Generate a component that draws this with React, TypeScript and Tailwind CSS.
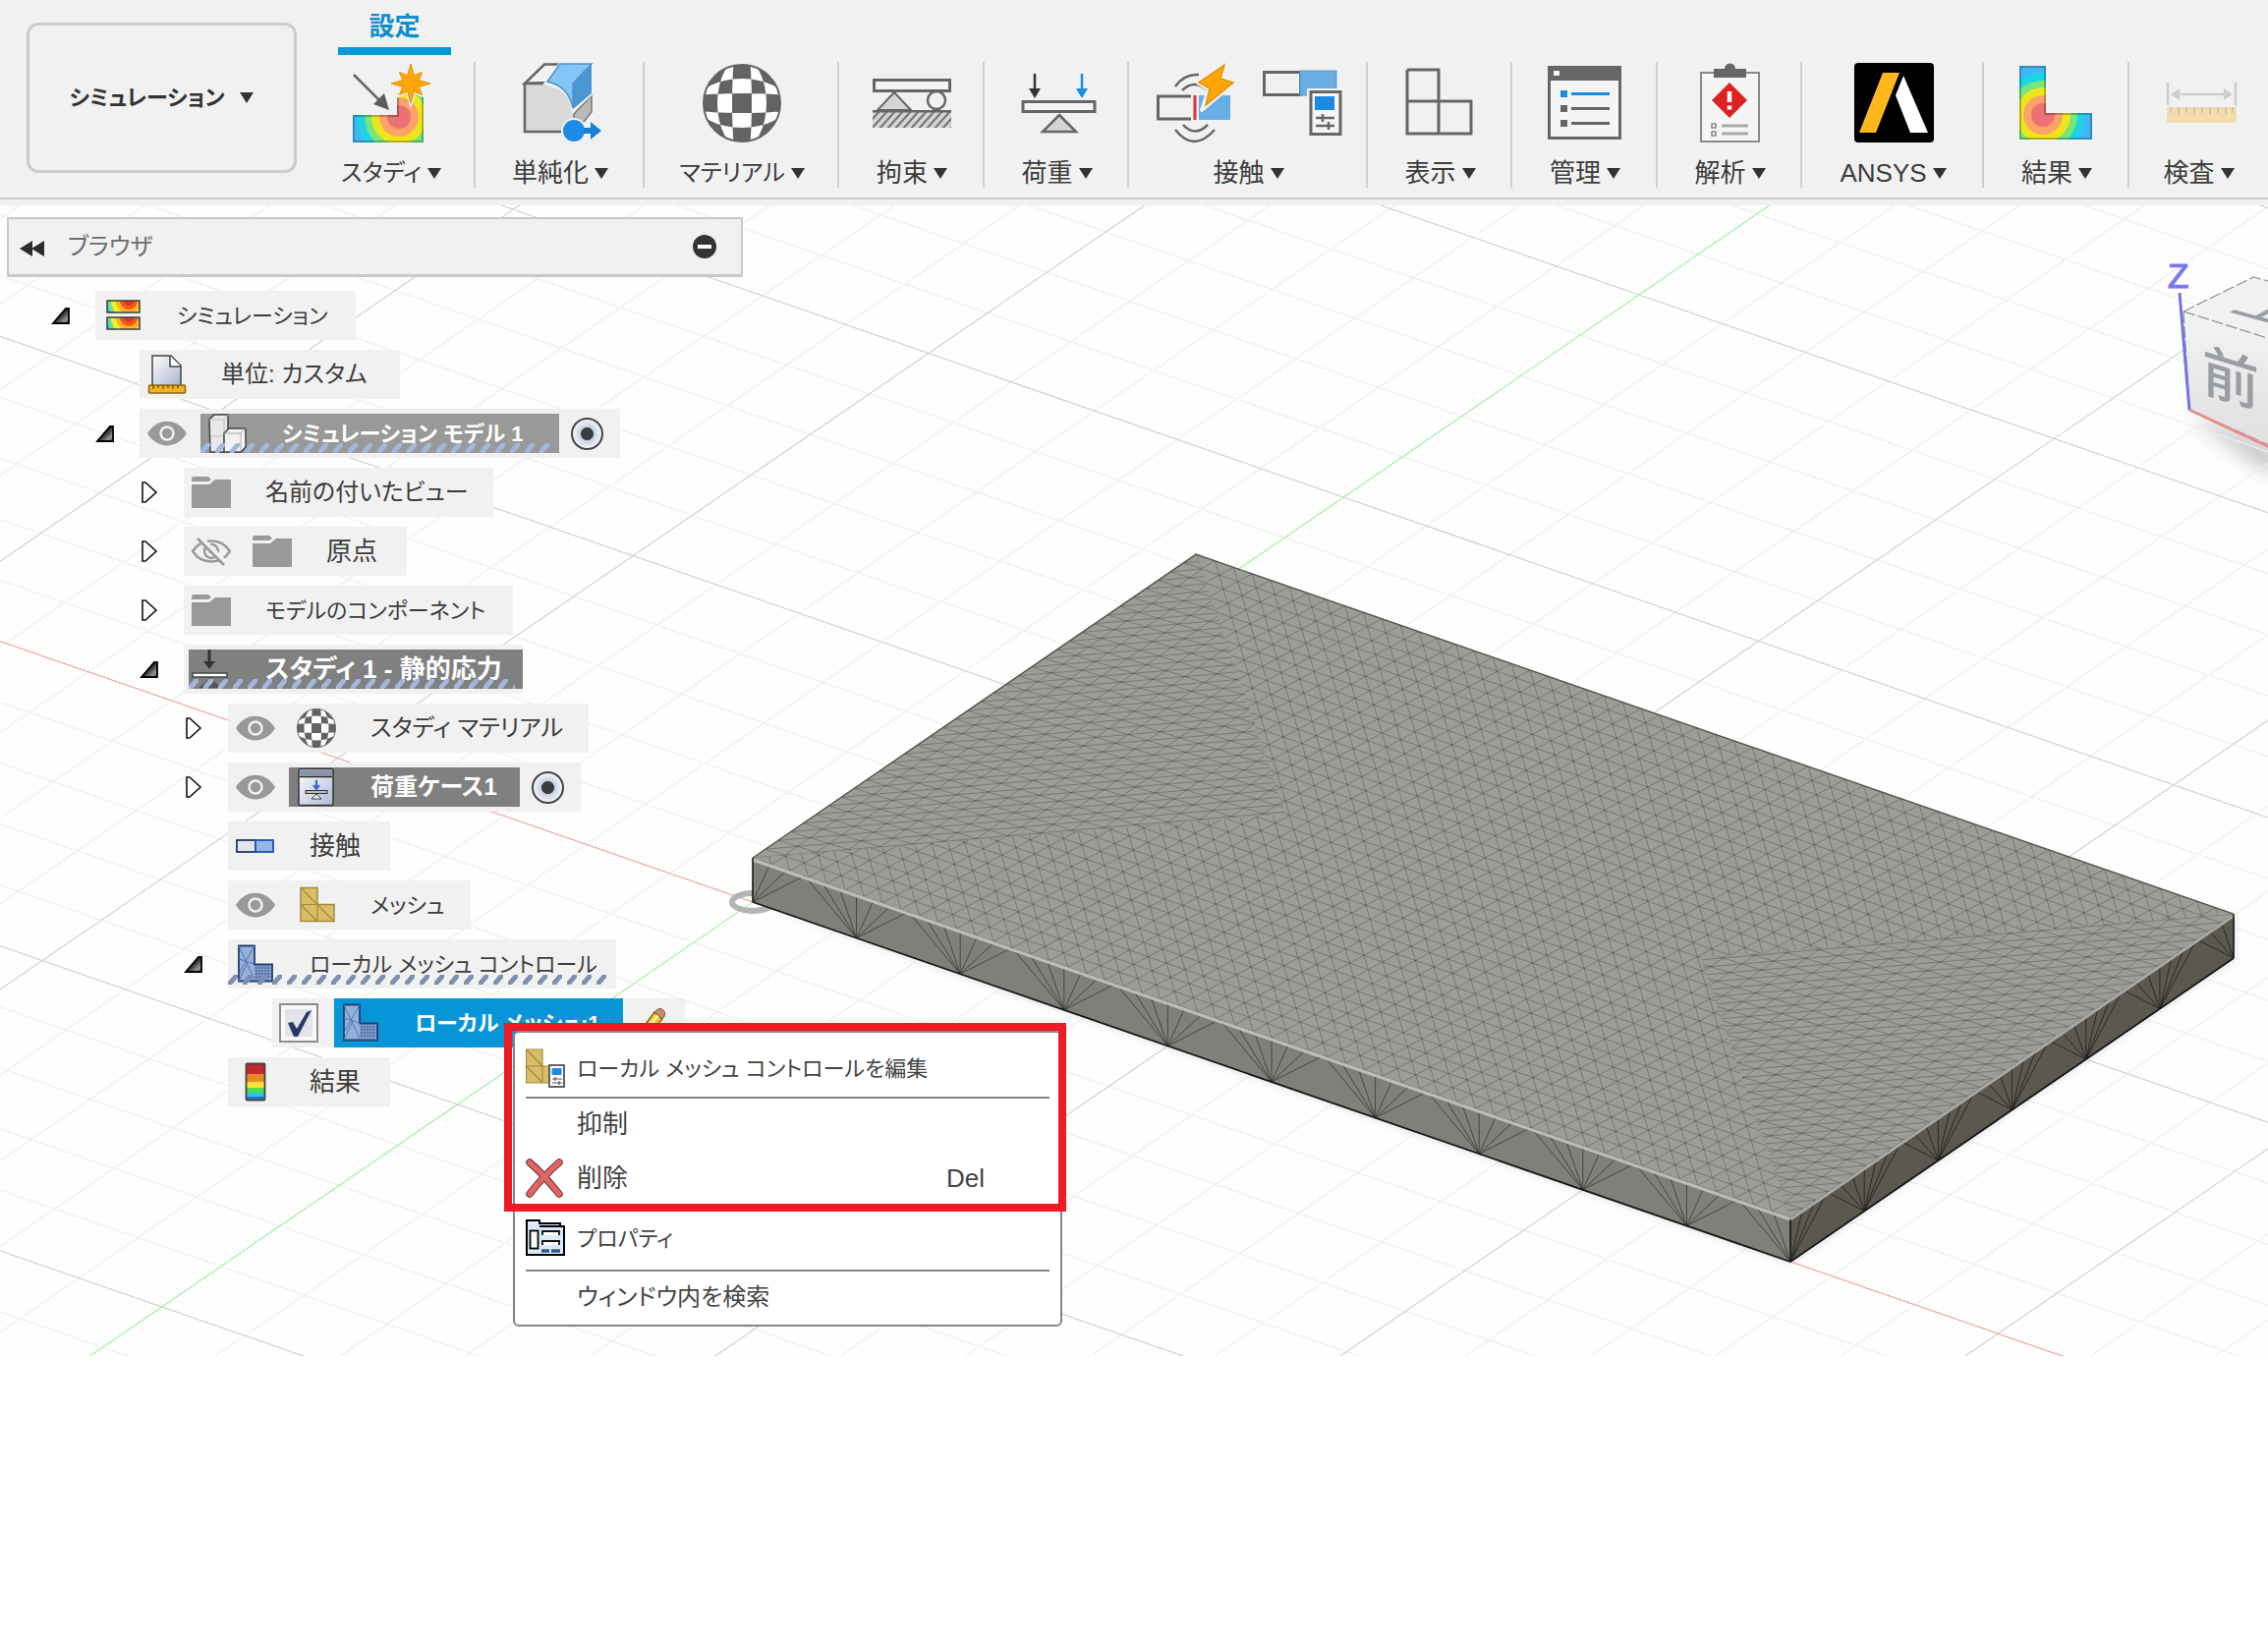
import type { ReactNode } from 'react';

type Pt = [number, number];

/* ---------- model space: u runs along the long edge (0-60), v along the short one (0-36) ---------- */

const top = (u: number, v: number): Pt => [766 + u * 17.6 + v * 12.53, 873 + u * 6.1 - v * 8.58];
const bottom = (u: number, v: number): Pt => {
  const [x, y] = top(u, v);
  return [x, y + 45];
};
const seg = (a: Pt, b: Pt) => `M${a[0].toFixed(1)} ${a[1].toFixed(1)}L${b[0].toFixed(1)} ${b[1].toFixed(1)}`;
const poly = (pts: Pt[]) => pts.map((p) => `${p[0].toFixed(1)},${p[1].toFixed(1)}`).join(' ');
const range = (from: number, to: number) => Array.from({ length: to - from + 1 }, (_, i) => from + i);

const PITCH = 60 / 56;
const LEAN = 0.12;

const rowMesh = [
  ...range(0, 36).map((k) => seg(top(0, k), top(60, k))),
  ...range(-5, 56).map((i) => seg(top(i * PITCH, 0), top(i * PITCH + 36 * LEAN, 36))),
  ...range(0, 90).map((i) => seg(top(i * PITCH, 0), top(i * PITCH - 36 * (PITCH - LEAN), 36))),
].join('');

const SIDE = 36 / 35;
const endMesh = (at: (u: number, v: number) => Pt) =>
  [
    ...range(0, 17).map((k) => seg(at(k * PITCH, 0), at(k * PITCH, 36))),
    ...range(-22, 35).map((j) => seg(at(0, j * SIDE), at(18, j * SIDE + 1))),
    ...range(-22, 35).map((j) => seg(at(0, j * SIDE), at(18, j * SIDE + 1 + (18 / PITCH) * SIDE))),
  ].join('');
const leftMesh = endMesh(top);
const rightMesh = endMesh((u, v) => top(60 - u, 36 - v));

const fans = (apex: (t: number) => Pt, edge: (t: number) => Pt, cells: number) =>
  range(0, cells)
    .flatMap((k) =>
      [-3, -2, -1, 0, 1, 2, 3]
        .map((d) => k * 6 + d)
        .filter((t) => t >= 0 && t <= cells * 6)
        .map((t) => seg(apex(k * 6), edge(t)))
    )
    .join('');
const frontFans = fans((t) => bottom(t, 0), (t) => top(t, 0), 10);
const sideFans = fans((t) => bottom(60, t), (t) => top(60, t), 6);

const gridA = (j: number) => {
  const x = 766 + j * 60.13;
  const y = 918 - j * 41.2;
  return seg([x - 8448, y - 2928], [x + 8448, y + 2928]);
};
const gridB = (i: number) => {
  const x = 766 + i * 84.48;
  const y = 918 + i * 29.28;
  return seg([x - 6013, y + 4120], [x + 6013, y - 4120]);
};
const lines = range(-45, 45).filter((n) => n !== 0);
const minorGrid = lines.filter((n) => n % 5 !== 0).map((n) => gridA(n) + gridB(n)).join('');
const majorGrid = lines.filter((n) => n % 5 === 0).map((n) => gridA(n) + gridB(n)).join('');

const corners = {
  a: top(0, 0),
  b: top(0, 36),
  c: top(60, 36),
  d: top(60, 0),
};

function Viewport() {
  return (
    <svg viewBox="0 209 2308 1171" className="col-start-1 row-start-1 block h-auto w-full self-start" aria-hidden="true">
      <defs>
        <clipPath id="clip-left">
          <polygon points={poly([top(0, 0), top(18, 18), top(0, 36)])} />
        </clipPath>
        <clipPath id="clip-right">
          <polygon points={poly([top(60, 0), top(42, 18), top(60, 36)])} />
        </clipPath>
        <clipPath id="clip-mid">
          <polygon points={poly([top(0, 0), top(18, 18), top(0, 36), top(60, 36), top(42, 18), top(60, 0)])} />
        </clipPath>
        <linearGradient id="cube-front" x1="0" y1="0" x2="0" y2="1">
          <stop offset="0" stopColor="#f4f4f4" />
          <stop offset="1" stopColor="#dedede" />
        </linearGradient>
        <filter id="soft" x="-50%" y="-50%" width="200%" height="200%">
          <feGaussianBlur stdDeviation="10" />
        </filter>
        <filter id="soft-small" x="-10%" y="-10%" width="120%" height="120%">
          <feGaussianBlur stdDeviation="4" />
        </filter>
      </defs>
      <rect x="0" y="209" width="2308" height="1171" fill="#fefefe" />

      <polygon points="2228,418 2308,452 2330,470 2308,480 2250,440" fill="#9a9a9a" opacity="0.6" filter="url(#soft)" />
      <path d={minorGrid} stroke="#efefef" strokeWidth="1.2" />
      <path d={majorGrid} stroke="#d2d2d2" strokeWidth="1.2" />
      <path d={gridA(0)} stroke="#f5a3a3" strokeWidth="1.2" />
      <path d={gridB(0)} stroke="#a2f0a2" strokeWidth="1.2" />
      <ellipse cx="766" cy="918" rx="21" ry="9" fill="none" stroke="#b4b4b4" strokeWidth="6" />

      <polygon points={poly([bottom(0, 0), bottom(60, 0), bottom(60, 36), top(60, 36), top(60, 0)])} fill="#888" opacity="0.4" filter="url(#soft-small)" />
      <polygon points={poly([corners.a, corners.b, corners.c, corners.d])} fill="#9e9c96" />
      <g stroke="#3a3a36" strokeOpacity="0.36" strokeWidth="1" fill="none">
        <path d={rowMesh} clipPath="url(#clip-mid)" />
        <path d={leftMesh} clipPath="url(#clip-left)" />
        <path d={rightMesh} clipPath="url(#clip-right)" />
      </g>
      <polygon points={poly([corners.a, corners.d, bottom(60, 0), bottom(0, 0)])} fill="#7f807b" />
      <path d={frontFans} stroke="#33332f" strokeOpacity="0.75" strokeWidth="1" />
      <polygon points={poly([corners.d, corners.c, bottom(60, 36), bottom(60, 0)])} fill="#5b5850" />
      <path d={sideFans} stroke="#22211d" strokeOpacity="0.85" strokeWidth="1" />
      <polyline points={poly([corners.a, corners.b, corners.c])} fill="none" stroke="#55554f" strokeWidth="1.4" />
      <path d={seg([766, 875], [1822, 1241])} stroke="#bdbdb9" strokeWidth="3" />
      <path d={seg([1822, 1241], [2273, 932])} stroke="#a9a9a4" strokeWidth="3" />
      <path d={seg([766, 873], [766, 918]) + seg([1822, 1241], [1822, 1284]) + seg([2273, 931], [2273, 975])} stroke="#1d1d1b" strokeWidth="1.5" />
      <polyline points={poly([bottom(0, 0), bottom(60, 0), bottom(60, 36)])} fill="none" stroke="#161614" strokeWidth="1.8" />

      <polygon points="2222,317 2293,282 2320,289 2320,348" fill="#f1f1f1" />
      <polygon points="2222,317 2320,348 2320,460 2228,417" fill="url(#cube-front)" />
      <path d="M2222 317L2293 282L2320 289M2222 317L2320 348M2222 317L2228 417L2320 458" fill="none" stroke="#8f8f8f" strokeWidth="1.2" strokeDasharray="12 3" />
      <path d="M2228 417L2320 460" stroke="#e58d8d" strokeWidth="3" />
      <path d="M2218 298L2228 417" stroke="#7672e6" strokeWidth="3" />
      <text x="2206" y="293" fontSize="35" fill="#7b77f0" stroke="#7b77f0" strokeWidth="1.2" fontFamily="'Liberation Sans', Arial, sans-serif">Z</text>
      <text transform="translate(2241 397) skewY(17)" fontSize="58" fill="#9a9ea3" fontWeight="500" fontFamily="'Noto Sans CJK JP', sans-serif">前</text>
      <text transform="matrix(0.95 0.26 -0.8 0.42 2268 316)" fontSize="62" fill="#9a9ea3" fontWeight="500" fontFamily="'Noto Sans CJK JP', sans-serif">上</text>
    </svg>
  );
}

/* ---------- toolbar icons ---------- */

function Icon80({ children, box = '0 0 80 82' }: { children: ReactNode; box?: string }) {
  return (
    <svg viewBox={box} className="h-[82px] w-20 shrink-0 overflow-visible" fill="none" aria-hidden="true">
      {children}
    </svg>
  );
}

function Contours({ id, cx, cy, shape }: { id: string; cx: number; cy: number; shape: string }) {
  const bands: [number, string][] = [
    [43, '#1fd3e6'],
    [35, '#74e67a'],
    [28, '#eee61c'],
    [20, '#fda36a'],
    [12, '#ea7272'],
  ];
  return (
    <>
      <clipPath id={id}>
        <path d={shape} />
      </clipPath>
      <g clipPath={`url(#${id})`}>
        <path d={shape} fill="#43b6f8" />
        {bands.map(([r, c]) => (
          <circle key={r} cx={cx} cy={cy} r={r} fill={c} />
        ))}
        <path d={shape} stroke="#000" strokeOpacity="0.25" strokeWidth="4" />
      </g>
    </>
  );
}

const starPoints = (cx: number, cy: number, R: number, r: number) =>
  range(0, 15)
    .map((i) => {
      const q = i % 2 === 0 ? (i % 4 === 0 ? R : R * 0.82) : r;
      const t = (i * Math.PI) / 8 - Math.PI / 2;
      return `${(cx + q * Math.cos(t)).toFixed(1)},${(cy + q * Math.sin(t)).toFixed(1)}`;
    })
    .join(' ');

const StudyIcon = () => (
  <Icon80>
    <Contours id="study" cx={48} cy={55} shape="M1 53H46V31H73V81H1Z" />
    <polygon points={starPoints(60, 21, 26, 12)} fill="#f2f2f2" />
    <polygon points={starPoints(60, 21, 20, 9)} fill="#fca50a" stroke="#e8930a" strokeWidth="1" />
    <path d="M2 12L30 40" stroke="#666" strokeWidth="2.5" />
    <path d="M38 48L22 42L33 31Z" fill="#5c5c5c" />
  </Icon80>
);

const SimplifyIcon = () => (
  <Icon80>
    <path d="M4 21L24 1.500H40L27 20Z" fill="#f2f2f2" stroke="#666" strokeWidth="2.500" />
    <path d="M4 21H27C44 24 52 38 53 51V70H4Z" fill="#d9d9d9" />
    <path d="M27 21H4V70H46" stroke="#666" strokeWidth="2.500" />
    <path d="M54 52L72 33V50L64 60H54Z" fill="#b9b9b9" stroke="#777" strokeWidth="1.500" />
    <path d="M25 21L40 1H72V31L53 49C52 34 42 24 25 21Z" fill="#4b96d2" stroke="#f2f2f2" strokeWidth="3" />
    <path d="M27 19L40 1H72L53 21V46C50 32 42 22 27 19Z" fill="#84c4f7" stroke="#4d94cc" strokeWidth="1.500" />
    <path d="M53 21L72 1V31L53 47Z" fill="#4b96d2" />
    <circle cx="54" cy="69" r="13" fill="#f2f2f2" />
    <circle cx="54" cy="69" r="11" fill="#1b8be6" />
    <path d="M64 66H71V60L82 69L71 78V72H64Z" fill="#1a80d6" />
  </Icon80>
);

function Checker({ className }: { className: string }) {
  return (
    <svg viewBox="0 0 80 80" className={className} aria-hidden="true">
      <clipPath id="ball">
        <circle cx="40" cy="40" r="39" />
      </clipPath>
      <g clipPath="url(#ball)">
        <circle cx="40" cy="40" r="39" fill="#fff" />
        <path
          fillRule="evenodd"
          fill="#636363"
          d="M0 40a40 40 0 1 0 80 0a40 40 0 1 0 -80 0ZM30 40a10 75 0 1 0 20 0a10 75 0 1 0 -20 0ZM15 40a25 46 0 1 0 50 0a25 46 0 1 0 -50 0ZM-35 40a75 10 0 1 0 150 0a75 10 0 1 0 -150 0ZM-6 40a46 25 0 1 0 92 0a46 25 0 1 0 -92 0Z"
        />
      </g>
      <circle cx="40" cy="40" r="39" fill="none" stroke="#636363" strokeWidth="2" />
    </svg>
  );
}

const ConstraintIcon = () => (
  <Icon80>
    <rect x="1.500" y="17.500" width="77" height="11" fill="#f4f4f4" stroke="#666" strokeWidth="3" />
    <path d="M22 30L39 48H5Z" fill="#d5d5d5" stroke="#666" strokeWidth="2" />
    <circle cx="65" cy="38" r="9" stroke="#666" strokeWidth="2.500" />
    <clipPath id="hatch">
      <rect x="0" y="48" width="80" height="18" />
    </clipPath>
    <g clipPath="url(#hatch)">
      <rect x="0" y="48" width="80" height="18" fill="#d5d5d5" />
      {range(0, 11).map((i) => (
        <path key={i} d={`M${i * 8 - 10} 68L${i * 8 + 8} 48`} stroke="#777" strokeWidth="2.200" />
      ))}
      <path d="M0 49H80" stroke="#666" strokeWidth="3" />
    </g>
  </Icon80>
);

const LoadIcon = () => (
  <Icon80>
    <path d="M17 11V30" stroke="#333" strokeWidth="2.500" />
    <path d="M11 26H23L17 36Z" fill="#333" />
    <path d="M65 11V30" stroke="#1b8be6" strokeWidth="2.500" />
    <path d="M59 26H71L65 36Z" fill="#1b8be6" />
    <rect x="5" y="39.500" width="73" height="10" fill="#f4f4f4" stroke="#666" strokeWidth="3" />
    <path d="M42 53L59 70H25Z" fill="#d5d5d5" stroke="#666" strokeWidth="2.500" />
  </Icon80>
);

const AutoContactIcon = () => (
  <Icon80>
    <path d="M35 57H1.500V34H35" stroke="#666" strokeWidth="3" />
    <rect x="43" y="33" width="32" height="25" fill="#66aee3" />
    <path d="M39 33V58" stroke="#d33" strokeWidth="3" />
    <path d="M19 24Q28 11 43 12M26 28Q38 16 52 28M19 68Q38 92 59 68M27 63Q39 76 52 63" stroke="#666" strokeWidth="2.500" />
    <path d="M69 1L42 20L53 27L46 48L79 20L66 16Z" fill="#f2f2f2" stroke="#f2f2f2" strokeWidth="4" strokeLinejoin="round" />
    <path d="M69 2L43 20L54 26L50 43L78 20L65 16Z" fill="#ffa508" stroke="#dc940e" strokeWidth="1.500" />
  </Icon80>
);

const ManualContactIcon = () => (
  <Icon80>
    <rect x="1.500" y="9.500" width="37" height="23" stroke="#666" strokeWidth="3" />
    <rect x="38" y="8" width="37" height="25" fill="#66aee3" stroke="#5899cb" />
    <rect x="45" y="26" width="38" height="49" fill="#f2f2f2" />
    <rect x="49" y="29.500" width="30" height="43" fill="#f6f6f6" stroke="#666" strokeWidth="3" />
    <rect x="53" y="34" width="20" height="14" fill="#1b8be6" />
    <path d="M54 56H73M54 64H73M61 52V60M67 60V68" stroke="#666" strokeWidth="2.500" />
  </Icon80>
);

const DisplayIcon = () => (
  <Icon80>
    <path d="M6 7H38V72M6 7V72H71V39H6Z" stroke="#666" strokeWidth="3" />
  </Icon80>
);

const ManageIcon = () => (
  <Icon80>
    <rect x="3.500" y="4.500" width="72" height="72" fill="#f5f5f5" stroke="#666" strokeWidth="3" />
    <rect x="2" y="3" width="75" height="15" fill="#666" />
    <rect x="8" y="8" width="6" height="5" fill="#f5f5f5" />
    <rect x="15" y="28" width="7" height="7" fill="#1b8be6" />
    <path d="M26 31.500H65" stroke="#1b8be6" strokeWidth="3" />
    <rect x="15" y="43" width="7" height="7" fill="#666" />
    <rect x="15" y="58" width="7" height="7" fill="#666" />
    <path d="M26 46.500H65M26 61.500H65" stroke="#666" strokeWidth="3" />
  </Icon80>
);

const SolveIcon = () => (
  <Icon80>
    <rect x="10" y="10" width="59" height="70" fill="#f5f5f5" stroke="#8a8a8a" strokeWidth="2" />
    <rect x="23" y="6" width="33" height="9" fill="#666" />
    <circle cx="39.500" cy="6" r="5.500" fill="#666" />
    <path d="M39 20L57 38L39 56L21 38Z" fill="#de2222" />
    <path d="M39 29V40M39 43.500V47.500" stroke="#fff" strokeWidth="4.500" />
    <path d="M21 62H25V66H21ZM21 70H25V74H21Z" stroke="#888" strokeWidth="1.500" />
    <path d="M31 64H58M31 72H58" stroke="#aaa" strokeWidth="3" />
  </Icon80>
);

const AnsysIcon = () => (
  <Icon80>
    <rect x="0" y="0" width="81" height="81" rx="4" fill="#000" />
    <path d="M29 10H46L22 71H5Z" fill="#ffb71b" />
    <path d="M50 13L75 71H57L42 33Z" fill="#fff" />
  </Icon80>
);

const ResultIcon = () => (
  <Icon80>
    <Contours id="result" cx={26} cy={53} shape="M2 3H29V51H76V78H2Z" />
  </Icon80>
);

const InspectIcon = () => (
  <Icon80>
    <path d="M8 20V43M77 20V43M14 32H71" stroke="#cdcdcd" strokeWidth="2.500" />
    <path d="M11 32L20 26V38ZM74 32L65 26V38Z" fill="#cdcdcd" />
    <rect x="7" y="45" width="71" height="16" fill="#f3ddb0" />
    <path d="M11 45V51M19 45V53M27 45V51M35 45V53M43 45V51M51 45V53M59 45V51M67 45V53M74 45V51" stroke="#cfc4ab" strokeWidth="2" />
  </Icon80>
);

const Caret = () => (
  <svg viewBox="0 0 14 11" className="h-[11px] w-[14px] shrink-0" aria-hidden="true">
    <path d="M0 0H14L7 11Z" fill="#333" />
  </svg>
);

function Group({ label, width, children, kana, last }: { label: string; width: string; children: ReactNode; kana?: boolean; last?: boolean }) {
  return (
    <button type="button" className={`relative flex flex-col items-center pt-16 ${width}`}>
      <span className="flex gap-7">{children}</span>
      <span className={`mt-3 flex h-9 items-center gap-1.5 whitespace-nowrap text-[#3c3c3c] ${kana ? 'text-2xl' : 'text-[26px]'}`}>
        {label}
        <Caret />
      </span>
      {!last && <span className="absolute right-0 top-[63px] h-32 w-0.5 bg-[#cfcfcf]" />}
    </button>
  );
}

function Toolbar() {
  return (
    <header className="flex h-[209px] items-start overflow-hidden bg-[#f1f1f1]">
      <div className="flex h-[203px] w-full border-b-2 border-[#cccccc]">
        <div className="w-[312px] shrink-0 pl-[27px] pt-[23px]">
          <button type="button" className="flex h-[153px] w-[275px] items-center justify-center gap-4 rounded-xl border-[3px] border-[#cccccc] text-[22px] font-bold text-[#333]">
            シミュレーション
            <Caret />
          </button>
        </div>
        <div className="relative flex min-w-0 flex-1">
          <a href="#setup" className="absolute left-8 top-0 flex h-14 w-[115px] items-center justify-center border-b-8 border-[#0696d7] pt-1.5 text-[26px] font-bold text-[#0f8fce]">
            設定
          </a>
          <Group label="スタディ" width="w-[172px] shrink-0" kana><StudyIcon /></Group>
          <Group label="単純化" width="w-[172px] shrink-0"><SimplifyIcon /></Group>
          <Group label="マテリアル" width="w-[198px] shrink-0" kana><Checker className="h-[82px] w-20" /></Group>
          <Group label="拘束" width="w-[148px] shrink-0"><ConstraintIcon /></Group>
          <Group label="荷重" width="w-[147px] shrink-0"><LoadIcon /></Group>
          <Group label="接触" width="w-[243px] shrink-0"><AutoContactIcon /><ManualContactIcon /></Group>
          <Group label="表示" width="w-[147px] shrink-0"><DisplayIcon /></Group>
          <Group label="管理" width="w-[148px] shrink-0"><ManageIcon /></Group>
          <Group label="解析" width="w-[147px] shrink-0"><SolveIcon /></Group>
          <Group label="ANSYS" width="w-[185px] shrink-0"><AnsysIcon /></Group>
          <Group label="結果" width="w-[148px] shrink-0"><ResultIcon /></Group>
          <Group label="検査" width="min-w-0 flex-1" last><InspectIcon /></Group>
        </div>
      </div>
    </header>
  );
}

/* ---------- browser tree ---------- */

const Svg = ({ children, className = 'h-10 w-10' }: { children: ReactNode; className?: string }) => (
  <svg viewBox="0 0 40 40" className={className} fill="none" aria-hidden="true">
    {children}
  </svg>
);

const Eye = () => (
  <Svg>
    <path d="M0 20C10 3.500 30 3.500 40 20C30 36.500 10 36.500 0 20Z" fill="#999" />
    <circle cx="20" cy="20" r="6.500" fill="#999" stroke="#f1f1f1" strokeWidth="2.500" />
  </Svg>
);

const EyeOff = () => (
  <Svg>
    <path d="M1 20C10 6 30 6 39 20C30 34 10 34 1 20Z" stroke="#999" strokeWidth="2.500" />
    <circle cx="20" cy="20" r="7" stroke="#999" strokeWidth="2.500" />
    <circle cx="20" cy="20" r="2.500" fill="#999" />
    <path d="M7 5L35 33" stroke="#f1f1f1" strokeWidth="6" />
    <path d="M6 7L33 34" stroke="#999" strokeWidth="2.500" />
  </Svg>
);

const Folder = () => (
  <Svg>
    <path d="M0 7Q0 4 2 4H17L20 7L17 9H0Z" fill="#999" />
    <path d="M0 12H18L24 7H40V36H0Z" fill="#999" />
  </Svg>
);

const heatBands: [number, string][] = [
  [27, '#35b5f0'],
  [22, '#62dfa0'],
  [18, '#f6ee2c'],
  [13, '#fbb321'],
  [9, '#f0561e'],
  [5, '#e4321e'],
];

const SimIcon = () => (
  <Svg>
    {[5, 22].map((y) => (
      <g key={y}>
        <clipPath id={`heat-${y}`}>
          <rect x="4" y={y} width="33" height="12" />
        </clipPath>
        <g clipPath={`url(#heat-${y})`}>
          <rect x="4" y={y} width="33" height="12" fill="#2a7fdc" />
          {heatBands.map(([r, c]) => (
            <circle key={r} cx="26" cy={y} r={r} fill={c} />
          ))}
        </g>
        <rect x="4" y={y} width="33" height="12" stroke="#3c3c3c" strokeWidth="1.500" />
      </g>
    ))}
  </Svg>
);

const UnitsIcon = () => (
  <Svg>
    <defs>
      <linearGradient id="page" x1="0" y1="0" x2="1" y2="1">
        <stop offset="0" stopColor="#fff" />
        <stop offset="1" stopColor="#aab4cc" />
      </linearGradient>
    </defs>
    <path d="M5 1H24L34 11V32H5Z" fill="url(#page)" stroke="#444" strokeWidth="1.500" />
    <path d="M23 1V12H34" fill="#fff" stroke="#444" strokeWidth="1.500" />
    <rect x="1.500" y="31" width="37" height="8" rx="1" fill="#f0b429" stroke="#8a6412" strokeWidth="1.500" />
    <path d="M6 31V35M11 31V34M16 31V35M21 31V34M26 31V35M31 31V34" stroke="#7a5810" strokeWidth="1.500" />
  </Svg>
);

const ModelIcon = () => (
  <Svg>
    <path d="M1 6L6 1H20V36L16 39H2Z" fill="#e9e9ec" stroke="#444" strokeWidth="1.500" />
    <path d="M1 6H16L20 1M16 6V38M2 23H16" stroke="#bcbcc4" />
    <path d="M16 20L21 15H38V34L33 39H16Z" fill="#f3f3f5" stroke="#444" strokeWidth="1.500" />
    <path d="M16 20H33L38 15M33 20V38" stroke="#aaa" />
  </Svg>
);

const StaticIcon = () => (
  <Svg>
    <path d="M19 0V14" stroke="#333" strokeWidth="3" />
    <path d="M13 12H25L19 20Z" fill="#333" />
    <rect x="2" y="24" width="35" height="4" fill="#fff" stroke="#444" strokeWidth="1.500" />
    <path d="M20 29L32 39H8Z" fill="#555" />
  </Svg>
);

const LoadCaseIcon = () => (
  <Svg>
    <defs>
      <linearGradient id="lc" x1="0" y1="0" x2="1" y2="1">
        <stop offset="0" stopColor="#fdfdff" />
        <stop offset="1" stopColor="#aebbd6" />
      </linearGradient>
    </defs>
    <rect x="2" y="1.500" width="35" height="37" rx="1" fill="url(#lc)" stroke="#333" strokeWidth="1.500" />
    <rect x="3" y="2.500" width="33" height="6" fill="#8b93a8" />
    <path d="M3 9.500H36" stroke="#222" strokeWidth="1.500" />
    <path d="M20 13V21M17 18L20 22L23 18" stroke="#2a62d8" strokeWidth="2" />
    <rect x="9" y="23.500" width="22" height="3" fill="#bbb" stroke="#333" />
    <path d="M20 27L25 32H15Z" fill="#fff" stroke="#333" />
  </Svg>
);

const ContactIcon = () => (
  <Svg>
    <rect x="1" y="14" width="19" height="12" fill="#e2e5ec" stroke="#223a66" strokeWidth="1.800" />
    <rect x="20" y="14" width="18" height="12" fill="#93b7e6" stroke="#2251b5" strokeWidth="1.800" />
  </Svg>
);

const MeshIcon = () => (
  <Svg>
    <path d="M4 2.500H21V19.500H38V36.500H4Z" fill="#d8be68" stroke="#a58b3b" strokeWidth="1.500" />
    <path d="M4 2.500L21 19.500V36.500M4 19.500H21L38 36.500M4 19.500L21 36.500" stroke="#a58b3b" strokeWidth="1.200" />
  </Svg>
);

const LocalMeshIcon = () => (
  <Svg>
    <path d="M3 1.500H19V20.500H37V37.500H3Z" fill="#92b1dc" stroke="#233e6d" strokeWidth="1.800" />
    <path d="M3 1.500L19 36M19 1.500L3 30M3 15L19 20M3 37L12 18" stroke="#5577aa" strokeWidth="1" />
    <path d="M19 24H36M19 27H36M19 30H36M19 33H36M21 21V36M24 21V36M27 21V36M30 21V36M33 21V36" stroke="#4a6aa0" strokeWidth="1" />
  </Svg>
);

const LegendIcon = () => (
  <Svg>
    <rect x="10" y="2" width="20" height="10" fill="#c4272d" />
    <rect x="10" y="12" width="20" height="8" fill="#e88a24" />
    <rect x="10" y="20" width="20" height="6" fill="#f7e339" />
    <rect x="10" y="26" width="20" height="5" fill="#55dc4a" />
    <rect x="10" y="31" width="20" height="4" fill="#27c4ee" />
    <rect x="10" y="35" width="20" height="3" fill="#2f6fd0" />
    <rect x="10.500" y="1.500" width="19" height="37" rx="1" stroke="#444" strokeWidth="1.800" />
  </Svg>
);

const Pencil = () => (
  <Svg>
    <path d="M1 40L5 29L20 9L28 16L12 35Z" fill="#f7c02f" stroke="#7d5a14" strokeWidth="1.300" />
    <path d="M8 31L24 12" stroke="#fff2b0" strokeWidth="3" />
    <path d="M20 9Q25 3 29 7Q33 11 28 16Z" fill="#c98b66" stroke="#7d5a3a" />
  </Svg>
);

const Cell = ({ children }: { children: ReactNode }) => <span className="flex w-[62px] shrink-0 items-center pl-2">{children}</span>;

function Hatch({ id, color }: { id: string; color: string }) {
  return (
    <svg className="pointer-events-none absolute bottom-0 left-0 h-2.5 w-[calc(100%-8px)]" aria-hidden="true">
      <pattern id={id} width="15" height="10" patternUnits="userSpaceOnUse">
        <path d="M0 7L6 0H10V3L4 10H0Z" fill={color} />
      </pattern>
      <rect width="100%" height="10" fill={`url(#${id})`} />
    </svg>
  );
}

type Row = {
  label: string;
  indent: string;
  width: string;
  size: string;
  icon: ReactNode;
  eye?: 'on' | 'off';
  arrow?: 'open' | 'closed';
  tone?: 'model' | 'dark';
  radio?: boolean;
  hatch?: string;
};

const S = 'text-[22px]';
const M = 'text-2xl';
const L = 'text-[26px]';

const rows: Row[] = [
  { label: 'シミュレーション', indent: 'pl-[52px]', width: 'w-[265px]', size: S, icon: <SimIcon />, arrow: 'open' },
  { label: '単位: カスタム', indent: 'pl-[97px]', width: 'w-[265px]', size: M, icon: <UnitsIcon /> },
  { label: 'シミュレーション モデル 1', indent: 'pl-[97px]', width: 'w-[489px]', size: S, icon: <ModelIcon />, eye: 'on', arrow: 'open', tone: 'model', radio: true, hatch: '#a5b6de' },
  { label: '名前の付いたビュー', indent: 'pl-[142px]', width: 'w-[315px]', size: M, icon: <Folder />, arrow: 'closed' },
  { label: '原点', indent: 'pl-[142px]', width: 'w-[227px]', size: L, icon: <Folder />, eye: 'off', arrow: 'closed' },
  { label: 'モデルのコンポーネント', indent: 'pl-[142px]', width: 'w-[335px]', size: S, icon: <Folder />, arrow: 'closed' },
  { label: 'スタディ 1 - 静的応力', indent: 'pl-[142px]', width: 'w-[345px]', size: L, icon: <StaticIcon />, arrow: 'open', tone: 'dark', hatch: '#a5b6de' },
  { label: 'スタディ マテリアル', indent: 'pl-[187px]', width: 'w-[367px]', size: M, icon: <Checker className="h-10 w-10" />, eye: 'on', arrow: 'closed' },
  { label: '荷重ケース1', indent: 'pl-[187px]', width: 'w-[359px]', size: M, icon: <LoadCaseIcon />, eye: 'on', arrow: 'closed', tone: 'dark', radio: true },
  { label: '接触', indent: 'pl-[187px]', width: 'w-[165px]', size: L, icon: <ContactIcon /> },
  { label: 'メッシュ', indent: 'pl-[187px]', width: 'w-[247px]', size: S, icon: <MeshIcon />, eye: 'on' },
  { label: 'ローカル メッシュ コントロール', indent: 'pl-[187px]', width: 'w-[395px]', size: S, icon: <LocalMeshIcon />, arrow: 'open', hatch: '#7d8fb3' },
];

function Expander({ state }: { state?: 'open' | 'closed' }) {
  if (!state) return <span className="w-[45px] shrink-0" />;
  return (
    <button type="button" aria-label={state === 'open' ? '折りたたむ' : '展開'} className="flex w-[45px] shrink-0 items-center">
      {state === 'open' ? (
        <svg viewBox="0 0 20 20" className="h-5 w-5" aria-hidden="true">
          <defs>
            <linearGradient id="tri" x1="0" y1="0" x2="1" y2="1">
              <stop offset="0.4" stopColor="#111" />
              <stop offset="0.8" stopColor="#999" />
              <stop offset="1" stopColor="#222" />
            </linearGradient>
          </defs>
          <path d="M2 18L15 3H18V18Z" fill="url(#tri)" stroke="#000" strokeWidth="1.800" />
        </svg>
      ) : (
        <svg viewBox="0 0 20 24" className="h-6 w-5" aria-hidden="true">
          <path d="M3 2H6L17 12L6 22H3Z" fill="#fff" stroke="#111" strokeWidth="1.600" />
        </svg>
      )}
    </button>
  );
}

const Radio = ({ label }: { label: string }) => (
  <span className="flex w-[62px] shrink-0 items-center pl-3">
    <input
      type="radio"
      name={label}
      aria-label={label}
      defaultChecked
      className="h-[33px] w-[33px] appearance-none rounded-full border-2 border-[#444] bg-[radial-gradient(circle,#3b3b40_0_6px,#c9d0e0_7px,#f4f6fa_15px)]"
    />
  </span>
);

function TreeRow({ row }: { row: Row }) {
  const fill =
    row.tone === 'model' ? 'my-[5px] bg-[#999999] font-bold text-white' : row.tone === 'dark' ? 'my-[5px] bg-[#808080] font-bold text-white' : 'text-[#3c3c3c]';
  const inset = row.tone === 'dark' && !row.eye;
  return (
    <li className={`flex ${row.indent}`}>
      <Expander state={row.arrow} />
      <div className={`relative flex h-[50px] bg-[#f1f1f1] ${row.width}`}>
        {row.eye && (
          <Cell>
            <button type="button" aria-label="表示切り替え">{row.eye === 'on' ? <Eye /> : <EyeOff />}</button>
          </Cell>
        )}
        <button type="button" className={`relative flex min-w-0 flex-1 items-stretch text-left ${fill} ${inset ? 'ml-[5px]' : ''}`}>
          <span className={`flex shrink-0 items-center ${inset ? 'w-[57px] pl-0.5' : 'w-[62px] pl-2'}`}>{row.icon}</span>
          <span className={`flex items-center whitespace-nowrap pl-[21px] ${row.size}`}>{row.label}</span>
          {row.hatch && row.tone && <Hatch id={`hatch-${row.tone}`} color={row.hatch} />}
        </button>
        {row.hatch && !row.tone && (
          <span className="absolute inset-x-0 bottom-1">
            <Hatch id="hatch-local" color={row.hatch} />
          </span>
        )}
        {row.radio && <Radio label={row.label} />}
      </div>
    </li>
  );
}

function Browser() {
  return (
    <section className="relative col-start-1 row-start-1 w-[760px] pt-3">
      <div className="ml-[7px] flex h-[61px] w-[749px] items-center border-2 border-b-[3px] border-[#c9c9c9] bg-[#f1f1f1] pl-[10px] pr-6">
        <button type="button" aria-label="折りたたむ">
          <svg viewBox="0 0 28 18" className="mt-1 h-[18px] w-7" aria-hidden="true">
            <path d="M14 1V17L1 9ZM26 1V17L13 9Z" fill="#2c2c2c" />
          </svg>
        </button>
        <h2 className="ml-[22px] flex-1 text-2xl text-[#6c6c6c]">ブラウザ</h2>
        <button type="button" aria-label="最小化">
          <svg viewBox="0 0 26 26" className="h-[26px] w-[26px]" aria-hidden="true">
            <circle cx="13" cy="13" r="12" fill="#333" />
            <rect x="6" y="11" width="14" height="4" fill="#fff" />
          </svg>
        </button>
      </div>
      <ul className="mt-[14px] flex flex-col gap-2.5">
        {rows.map((r) => (
          <TreeRow key={r.label} row={r} />
        ))}
        <li className="flex pl-[277px]">
          <div className="flex h-[50px] w-[420px] bg-[#f1f1f1]">
            <label className="relative flex w-[63px] shrink-0 items-center pl-[7px]">
              <input type="checkbox" defaultChecked aria-label="ローカル メッシュ:1" className="h-10 w-10 appearance-none border-2 border-[#8e8e8e] bg-[#e3e4ea] shadow-[inset_0_0_0_4px_#f8f8f8]" />
              <svg viewBox="0 0 40 40" className="pointer-events-none absolute left-[7px] h-10 w-10" aria-hidden="true">
                <path d="M9 20L14 19L18 26L28 9L33 7L19 34H15Z" fill="#2b3768" />
              </svg>
            </label>
            <button type="button" className="flex w-[294px] bg-[#0696d7] font-bold text-white">
              <span className="flex w-[62px] shrink-0 items-center self-center pl-[7px]"><LocalMeshIcon /></span>
              <span className="self-center whitespace-nowrap pl-[20px] text-[22px]">ローカル メッシュ:1</span>
            </button>
            <button type="button" aria-label="編集" className="pl-3"><Pencil /></button>
          </div>
        </li>
        <li className="flex pl-[232px]">
          <div className="flex h-[50px] w-[165px] items-center bg-[#f1f1f1] text-[26px] text-[#3c3c3c]">
            <Cell><LegendIcon /></Cell>
            <span className="pl-[21px]">結果</span>
          </div>
        </li>
      </ul>
    </section>
  );
}

/* ---------- context menu ---------- */

const EditMeshIcon = () => (
  <Svg>
    <path d="M0.500 1H17V18H24V35H0.500Z" fill="#d8be68" stroke="#a58b3b" strokeWidth="1.200" />
    <path d="M0.500 18H17V35M0.500 1L17 18M0.500 18L17 35" stroke="#a58b3b" strokeWidth="1.200" />
    <rect x="24" y="17" width="15" height="22" fill="#fff" stroke="#555" strokeWidth="1.800" />
    <rect x="26.500" y="20" width="10" height="7" fill="#1b8be6" />
    <path d="M27 31H37M27 35H37M30 29V33M34 33V37" stroke="#555" strokeWidth="1.200" />
  </Svg>
);

const DeleteIcon = () => (
  <Svg>
    <path d="M4 4Q16 14 34 36M34 4Q18 18 4 36" stroke="#6b3636" strokeWidth="7.500" strokeLinecap="round" />
    <path d="M4 4Q16 14 34 36M34 4Q18 18 4 36" stroke="#e26464" strokeWidth="5.500" strokeLinecap="round" />
  </Svg>
);

const PropertiesIcon = () => (
  <Svg>
    <path d="M1 2H14V5H35V8H39V37H1Z" fill="#dce9f8" stroke="#000" strokeWidth="2" />
    <path d="M14 8H39" stroke="#000" strokeWidth="2" />
    <rect x="4.500" y="12.500" width="8" height="18" fill="#fff" stroke="#000" strokeWidth="1.800" />
    <path d="M17 17V13H34V17M17 27V23H34V27" fill="#fff" stroke="#111" strokeWidth="1.800" />
    <path d="M16 33H24M26 33H35" stroke="#33598f" strokeWidth="3.500" />
  </Svg>
);

function MenuItem({ label, icon, hint, height, size = 'text-[26px]' }: { label: string; icon?: ReactNode; hint?: string; height: string; size?: string }) {
  return (
    <button type="button" role="menuitem" className={`flex w-full items-center text-left text-[#444] ${height}`}>
      <span className="w-[52px] shrink-0">{icon}</span>
      <span className={`flex-1 whitespace-nowrap ${size}`}>{label}</span>
      {hint && <span className="w-[105px] text-[26px]">{hint}</span>}
    </button>
  );
}

function ContextMenu() {
  return (
    <div className="absolute left-[513px] top-[832px] w-[572px]">
      <div role="menu" className="ml-[9px] mr-1 mt-2 rounded-md border-2 border-[#858585] bg-white px-[11px] pb-0.5 pt-[7px]">
        <MenuItem label="ローカル メッシュ コントロールを編集" icon={<EditMeshIcon />} height="h-[58px]" size="text-[22px]" />
        <hr className="border-t-2 border-[#858585]" />
        <MenuItem label="抑制" height="h-[52px]" />
        <MenuItem label="削除" icon={<DeleteIcon />} hint="Del" height="h-[58px]" />
        <MenuItem label="プロパティ" icon={<PropertiesIcon />} height="h-16" size="text-[22px]" />
        <hr className="border-t-2 border-[#858585]" />
        <MenuItem label="ウィンドウ内を検索" height="h-[52px]" size="text-2xl" />
      </div>
      <div className="pointer-events-none absolute inset-x-0 top-0 h-48 border-8 border-[#ed1c24]" />
    </div>
  );
}

export default function App() {
  return (
    <div className="min-h-screen w-full overflow-hidden bg-white font-['Liberation_Sans','Noto_Sans_CJK_JP',sans-serif] [font-feature-settings:'palt']" lang="ja">
      <Toolbar />
      <main className="relative grid grid-cols-1">
        <Viewport />
        <Browser />
        <ContextMenu />
      </main>
    </div>
  );
}
